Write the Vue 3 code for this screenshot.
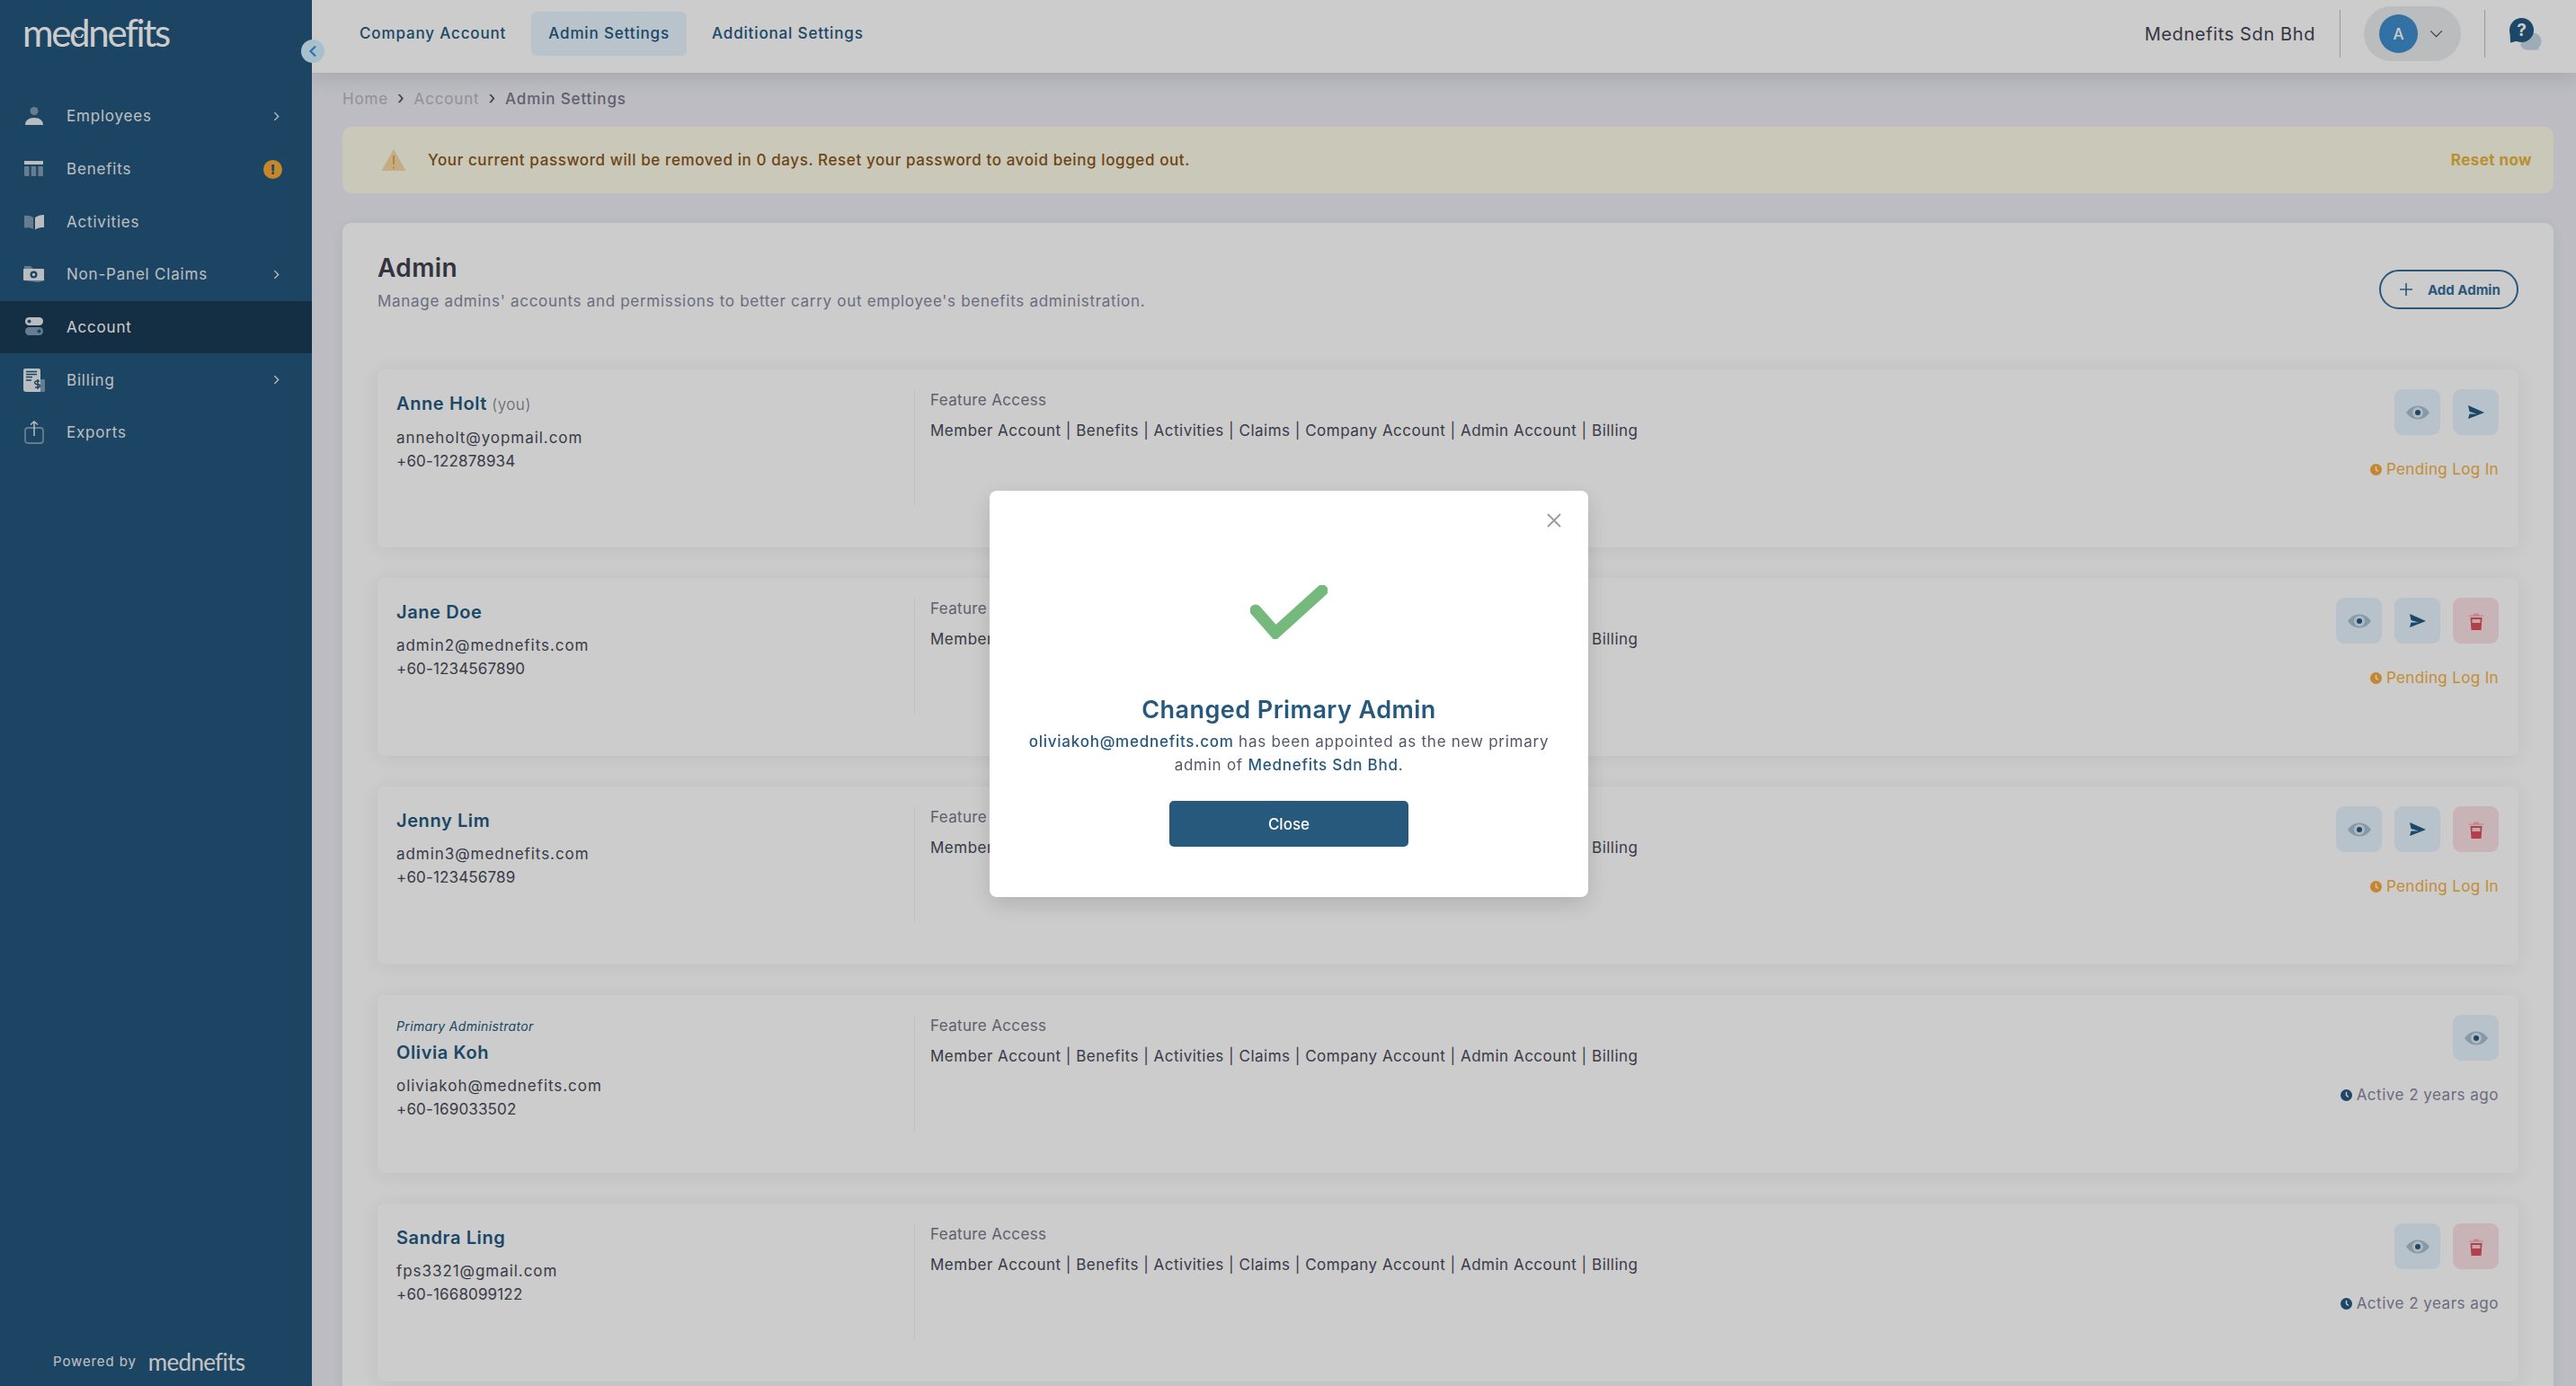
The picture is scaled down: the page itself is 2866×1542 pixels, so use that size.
<script setup>
const nav = [
  { label: 'Employees', icon: 'person', chevron: true },
  { label: 'Benefits', icon: 'table', badge: true },
  { label: 'Activities', icon: 'book' },
  { label: 'Non-Panel Claims', icon: 'cash', chevron: true },
  { label: 'Account', icon: 'toggle', active: true },
  { label: 'Billing', icon: 'bill', chevron: true },
  { label: 'Exports', icon: 'export' },
]
const tabs = [
  { label: 'Company Account' },
  { label: 'Admin Settings', active: true },
  { label: 'Additional Settings' },
]
const features = 'Member Account | Benefits | Activities | Claims | Company Account | Admin Account | Billing'
const admins = [
  { name: 'Anne Holt', you: true, email: 'anneholt@yopmail.com', phone: '+60-122878934', actions: ['view', 'send'], status: 'Pending Log In', pending: true },
  { name: 'Jane Doe', email: 'admin2@mednefits.com', phone: '+60-1234567890', actions: ['view', 'send', 'del'], status: 'Pending Log In', pending: true },
  { name: 'Jenny Lim', email: 'admin3@mednefits.com', phone: '+60-123456789', actions: ['view', 'send', 'del'], status: 'Pending Log In', pending: true },
  { name: 'Olivia Koh', primary: true, email: 'oliviakoh@mednefits.com', phone: '+60-169033502', actions: ['view'], status: 'Active 2 years ago' },
  { name: 'Sandra Ling', email: 'fps3321@gmail.com', phone: '+60-1668099122', actions: ['view', 'del'], status: 'Active 2 years ago' },
]
</script>

<template>
  <div class="app">
    <aside class="sidebar">
      <div class="logo">
        mednefits
        <svg class="smile" viewBox="0 0 10 5" width="10" height="5"><path d="M1 1a4 4 0 0 0 8 0" /></svg>
      </div>
      <nav class="nav">
        <div v-for="item in nav" :key="item.label" class="nav-item" :class="{ active: item.active }">
          <svg class="nav-icon" viewBox="0 0 24 26" width="24" height="26">
            <template v-if="item.icon === 'person'">
              <circle cx="12" cy="7.500" r="4.500" class="mute" />
              <path d="M2 23c0-5 4-8 10-8s10 3 10 8z" class="lite" />
            </template>
            <template v-else-if="item.icon === 'table'">
              <rect x="1" y="4" width="21" height="4" class="lite" />
              <rect x="1" y="10" width="5.500" height="11" rx="1" class="mute" />
              <rect x="8.700" y="10" width="5.500" height="11" rx="1" class="mute" />
              <rect x="16.400" y="10" width="5.500" height="11" rx="1" class="mute" />
            </template>
            <template v-else-if="item.icon === 'book'">
              <path d="M1 6c4-.5 7 0 10 2v13c-3-2-6-2-10-1.500z" class="mute" />
              <path d="M13 8c3-2 6-3 10-3v14c-4 0-7 .5-10 2.500z" class="lite" />
            </template>
            <template v-else-if="item.icon === 'cash'">
              <path d="M1 4h7l16 16-7 2-16-2z" class="mute" />
              <rect x="0" y="7" width="23" height="13" rx="1" class="lite" />
              <circle cx="11.500" cy="13.500" r="4" class="deep" />
              <circle cx="11.500" cy="13.500" r="1.700" class="lite" />
            </template>
            <template v-else-if="item.icon === 'toggle'">
              <rect x="2" y="2" width="20" height="9" rx="4.500" class="lite" />
              <circle cx="6.500" cy="6.500" r="2" class="deep" />
              <rect x="2" y="13" width="20" height="9" rx="4.500" class="mute" />
              <circle cx="17.500" cy="17.500" r="2" class="deep" />
            </template>
            <template v-else-if="item.icon === 'bill'">
              <rect x="19" y="12" width="5" height="14" rx="1" class="mute" />
              <path d="M2 0h15a2 2 0 0 1 2 2v24H3a3 3 0 0 1-3-3V2a2 2 0 0 1 2-2z" class="lite" />
              <path d="M3 3.500h12M3 6.500h12M3 9.500h7M3 13h6" class="line" />
              <path d="M16 12v11M18 14h-3.500a1.500 1.500 0 0 0 0 3.500h2a1.500 1.500 0 0 1 0 3.500H13" class="line" />
            </template>
            <template v-else>
              <rect x="2" y="8" width="20" height="17" rx="3" class="outline" />
              <path d="M12 17V1M8 4.500 12 1l4 3.500" class="arrow" />
            </template>
          </svg>
          <span class="nav-label">{{ item.label }}</span>
          <svg v-if="item.chevron" class="nav-chev" viewBox="0 0 8 12" width="7" height="11">
            <path d="M1.500 1 6.500 6l-5 5" />
          </svg>
          <span v-if="item.badge" class="nav-badge">!</span>
        </div>
      </nav>
      <div class="powered">
        <span>Powered by</span>
        <span class="logo-small">mednefits</span>
      </div>
      <button class="collapse" aria-label="Collapse">
        <svg viewBox="0 0 10 14" width="10" height="14"><path d="M8 1.500 2.500 7 8 12.500" /></svg>
      </button>
    </aside>

    <div class="main">
      <header class="topbar">
        <div class="tabs">
          <span v-for="tab in tabs" :key="tab.label" class="tab" :class="{ active: tab.active }">{{ tab.label }}</span>
        </div>
        <div class="top-right">
          <span class="company">Mednefits Sdn Bhd</span>
          <span class="vline"></span>
          <div class="user-pill">
            <span class="avatar">A</span>
            <svg viewBox="0 0 16 10" width="15" height="9"><path d="M1 1.500 8 8.500l7-7" /></svg>
          </div>
          <span class="vline"></span>
          <svg class="help" viewBox="0 0 36 36" width="36" height="36">
            <path d="M20 22a12 12 0 0 1 12 12l1 1.500h-12a8 8 0 0 1-9-7z" fill="#c6d8e3" />
            <circle cx="26" cy="26" r="9.500" fill="#c6d8e3" />
            <circle cx="13.500" cy="13.500" r="13.500" fill="#235980" />
            <path d="M0.500 15 1 27.500 11 25z" fill="#235980" />
            <text x="13.500" y="19.500" text-anchor="middle" class="help-q">?</text>
          </svg>
        </div>
      </header>

      <div class="content">
        <div class="crumbs">
          <span class="crumb">Home</span>
          <span class="sep">›</span>
          <span class="crumb">Account</span>
          <span class="sep">›</span>
          <span class="crumb current">Admin Settings</span>
        </div>

        <div class="alert">
          <svg class="alert-icon" viewBox="0 0 28 26" width="28" height="26">
            <path d="M14 1 27.500 25H.500z" fill="#f5d9a8" />
            <path d="M14 8v10M14 20.500v2" stroke="#e8a93b" stroke-width="2" />
          </svg>
          <span class="alert-text">Your current password will be removed in 0 days. Reset your password to avoid being logged out.</span>
          <span class="alert-link">Reset now</span>
        </div>

        <section class="panel">
          <div class="panel-head">
            <div>
              <h1>Admin</h1>
              <p>Manage admins' accounts and permissions to better carry out employee's benefits administration.</p>
            </div>
            <button class="add-btn">
              <svg viewBox="0 0 14 14" width="14" height="14"><path d="M7 0v14M0 7h14" /></svg>
              <span>Add Admin</span>
            </button>
          </div>

          <div class="cards">
            <article v-for="a in admins" :key="a.email" class="card">
              <div class="who">
                <div v-if="a.primary" class="tag">Primary Administrator</div>
                <div class="name">{{ a.name }}<span v-if="a.you" class="you"> (you)</span></div>
                <div class="contact email">{{ a.email }}</div>
                <div class="contact">{{ a.phone }}</div>
              </div>
              <div class="access">
                <div class="access-title">Feature Access</div>
                <div class="access-list">{{ features }}</div>
              </div>
              <div class="side">
                <div class="actions">
                  <span v-for="act in a.actions" :key="act" class="act" :class="{ danger: act === 'del' }">
                    <svg v-if="act === 'view'" viewBox="0 0 26 16" width="26" height="16">
                      <path d="M0 8c3-4.500 7.500-7.500 13-7.500S23 3.500 26 8c-3 4.500-7.500 7.500-13 7.500S3 12.500 0 8z" fill="#a7c0d2" />
                      <circle cx="13" cy="8" r="6" fill="#dce8f0" />
                      <circle cx="13" cy="8" r="3" fill="#235980" />
                    </svg>
                    <svg v-else-if="act === 'send'" viewBox="0 0 18 16" width="18" height="16">
                      <path d="M0 0 18 8 0 15 1.500 9.500H10L1.500 7z" fill="#235980" />
                    </svg>
                    <svg v-else viewBox="0 0 16 20" width="16" height="20">
                      <path d="M0 3.500h16v1.200H0zM5 1.500h6v2H5z" fill="#f2a9af" />
                      <path d="M1.500 6h13l-1 14h-11z" fill="#e04f5a" />
                      <rect x="3.500" y="8" width="9" height="4" fill="#f6d4d6" />
                    </svg>
                  </span>
                </div>
                <div class="status" :class="{ pending: a.pending }">
                  <svg viewBox="0 0 14 14" width="13" height="13">
                    <circle cx="7" cy="7" r="7" class="clock" />
                    <path d="M7 3v4.200l2.500 1.800" class="hands" />
                  </svg>
                  <span>{{ a.status }}</span>
                </div>
              </div>
            </article>
          </div>
        </section>
      </div>
    </div>

    <div class="overlay">
      <div class="modal">
        <svg class="modal-x" viewBox="0 0 16 16" width="16" height="16"><path d="M1 1l14 14M15 1 1 15" /></svg>
        <svg class="check" viewBox="0 0 86 60" width="86" height="60">
          <path d="M6 28 28 53 80 6" />
        </svg>
        <h2>Changed Primary Admin</h2>
        <p><b>oliviakoh@mednefits.com</b> has been appointed as the new primary<br />admin of <b>Mednefits Sdn Bhd</b>.</p>
        <button class="close-btn">Close</button>
      </div>
    </div>
  </div>
</template>

<style>
html, body { margin: 0; background: #ebecf3; }
</style>

<style scoped>
* { box-sizing: border-box; }
.app {
  display: flex;
  height: 100vh;
  overflow: hidden;
  font-family: "Inter", "Noto Sans", sans-serif;
  font-size: 17px;
  color: #494a59;
}
.sidebar {
  position: relative;
  flex: 0 0 347px;
  display: flex;
  flex-direction: column;
  background: #24567c;
  z-index: 2;
}
.logo {
  position: relative;
  height: 100px;
  padding: 8px 0 0 25px;
  font-family: "Lato", sans-serif;
  font-weight: 400;
  font-size: 42px;
  line-height: 56px;
  letter-spacing: -2.300px;
  color: #fff;
}
.smile { position: absolute; left: 83px; top: 37px; }
.smile path { fill: none; stroke: #fff; stroke-width: 1.800; }
.nav-item {
  display: flex;
  align-items: center;
  height: 58.700px;
  padding: 0 36px 0 26px;
  color: #eaeef1;
}
.nav-item.active { background: #193a54; color: #fff; }
.nav-icon { flex: none; margin-right: 24px; }
.nav-label { font-size: 17px; letter-spacing: .8px; }
.nav-chev { margin-left: auto; }
.nav-chev path { fill: none; stroke: #eaeef1; stroke-width: 1.600; }
.nav-badge {
  margin-left: auto;
  margin-right: -3px;
  width: 21px;
  height: 21px;
  border-radius: 50%;
  background: #faa836;
  color: #24567c;
  font-weight: 800;
  font-size: 15px;
  line-height: 21px;
  text-align: center;
}
.lite { fill: #e8edf0; }
.mute { fill: #7f9db3; }
.deep { fill: #24567c; }
.line { fill: none; stroke: #24567c; stroke-width: 1.500; }
.outline { fill: none; stroke: #7f9db3; stroke-width: 1.800; }
.arrow { fill: none; stroke: #e8edf0; stroke-width: 1.500; }
.powered {
  margin-top: auto;
  height: 42px;
  padding-left: 59px;
  display: flex;
  align-items: flex-start;
  gap: 13px;
  font-size: 15px;
  letter-spacing: .9px;
  line-height: 30px;
  color: #f0f2f4;
}
.logo-small {
  font-family: "Lato", sans-serif;
  font-size: 26px;
  font-weight: 400;
  letter-spacing: -.7px;
  line-height: 30px;
  color: #f6f6f6;
}
.collapse {
  position: absolute;
  top: 44px;
  right: -14px;
  width: 26px;
  height: 26px;
  padding: 0;
  border: 0;
  border-radius: 50%;
  background: #d0f0ff;
  display: flex;
  align-items: center;
  justify-content: center;
}
.collapse path { fill: none; stroke: #3a91d8; stroke-width: 2.200; }

.main { flex: 1; min-width: 0; display: flex; flex-direction: column; }
.topbar {
  flex: 0 0 81px;
  display: flex;
  align-items: center;
  justify-content: space-between;
  padding: 0 38px 0 34px;
  background: #fff;
  box-shadow: 0 4px 22px rgba(30, 30, 60, .14);
  position: relative;
  z-index: 1;
}
.tabs { display: flex; gap: 9px; margin-top: -7px; }
.tab {
  height: 49px;
  padding: 0 19px;
  display: flex;
  align-items: center;
  border-radius: 6px;
  color: #235980;
  font-weight: 500;
  font-size: 17px;
  letter-spacing: .85px;
}
.tab.active { background: #e7f4fe; }
.top-right { display: flex; align-items: center; margin-top: -6px; }
.company { font-size: 20px; font-weight: 400; letter-spacing: .6px; color: #444555; margin-right: 27px; }
.vline { width: 1px; height: 53px; background: #bfc0c8; }
.user-pill {
  height: 61px;
  width: 108px;
  margin: 0 26px;
  padding-left: 17px;
  display: flex;
  align-items: center;
  gap: 13px;
  border-radius: 31px;
  background: #eaebee;
}
.user-pill path { fill: none; stroke: #444555; stroke-width: 1.200; }
.avatar {
  width: 43px;
  height: 43px;
  border-radius: 50%;
  background: #3f8ecc;
  color: #fff;
  display: flex;
  align-items: center;
  justify-content: center;
  font-size: 17px;
  font-weight: 500;
}
.help { margin-left: 27px; }
.help-q { fill: #fff; font-size: 19px; font-weight: 700; font-family: "Inter", sans-serif; }

.content { flex: 1; min-height: 0; padding: 0 25px 0 34px; }
.crumbs {
  height: 58px;
  margin-bottom: 2px;
  display: flex;
  align-items: center;
  gap: 10px;
  font-size: 17px;
  letter-spacing: .85px;
  color: #b4b5c2;
}
.sep { color: #4c4d5c; font-size: 20px; line-height: 20px; margin-top: -3px; }
.current { color: #777889; font-weight: 500; }
.alert {
  height: 74px;
  display: flex;
  align-items: center;
  padding: 0 24px 0 43px;
  border-radius: 10px;
  background: #fcfae8;
}
.alert-icon { flex: none; margin-right: 24px; }
.alert-text { font-size: 17px; font-weight: 500; letter-spacing: .6px; color: #8b5519; }
.alert-link { margin-left: auto; font-size: 17px; font-weight: 700; letter-spacing: .45px; color: #e6b43b; }
.panel {
  margin-top: 33px;
  height: 1400px;
  padding: 32px 39px 0;
  border-radius: 10px;
  background: #fff;
  box-shadow: 0 2px 14px rgba(40, 40, 80, .05);
}
.panel-head { height: 131px; display: flex; justify-content: space-between; align-items: flex-start; }
h1 { margin: 0; font-size: 28px; font-weight: 600; line-height: 36px; letter-spacing: .4px; color: #40414f; }
.panel-head p { margin: 6px 0 0; font-size: 17px; line-height: 26px; letter-spacing: .7px; color: #8688a0; }
.add-btn {
  margin-top: 20px;
  width: 155px;
  height: 44px;
  display: flex;
  align-items: center;
  gap: 17px;
  padding: 0 0 0 21px;
  border: 2px solid #346f9c;
  border-radius: 22px;
  background: transparent;
  color: #346f9c;
  font-family: inherit;
  font-size: 15px;
  font-weight: 700;
}
.add-btn path { stroke: #346f9c; stroke-width: 1.600; fill: none; }
.cards { display: flex; flex-direction: column; gap: 34px; }
.card {
  height: 198px;
  display: flex;
  padding: 22px 22px 0 21px;
  border-radius: 8px;
  background: #fff;
  box-shadow: 0 2px 22px rgba(20, 20, 40, .07);
}
.who { flex: 0 0 576px; padding-top: 3px; }
.tag { font-size: 14px; font-style: italic; line-height: 20px; letter-spacing: .35px; color: #235980; margin-bottom: 6px; }
.name { font-size: 20px; font-weight: 600; line-height: 26px; letter-spacing: .6px; color: #235980; margin-bottom: 11px; }
.you { font-weight: 300; font-size: 17px; letter-spacing: .5px; color: #777889; }
.contact { font-size: 17px; line-height: 26px; letter-spacing: .15px; color: #494a59; }
.contact.email { letter-spacing: .95px; }
.access { flex: 1; height: 130px; padding-left: 17px; border-left: 1px solid #f0f0f3; }
.access-title { font-size: 17px; line-height: 24px; letter-spacing: .35px; color: #777889; margin-bottom: 10px; }
.access-list { font-size: 17px; line-height: 24px; letter-spacing: .49px; color: #494a59; }
.side { display: flex; flex-direction: column; align-items: flex-end; }
.actions { display: flex; gap: 14px; }
.act {
  width: 51px;
  height: 51px;
  border-radius: 9px;
  background: #e7f3fd;
  display: flex;
  align-items: center;
  justify-content: center;
}
.act.danger { background: #fae1e4; }
.status {
  margin-top: 26px;
  display: flex;
  align-items: center;
  gap: 5px;
  font-size: 17px;
  line-height: 24px;
  letter-spacing: .5px;
  color: #8688a0;
  white-space: nowrap;
}
.status.pending { color: #f5b042; letter-spacing: .35px; }
.clock { fill: #235980; }
.status.pending .clock { fill: #f5a83a; }
.hands { fill: none; stroke: #fff; stroke-width: 1.500; }

.overlay {
  position: fixed;
  inset: 0;
  z-index: 5;
  display: flex;
  align-items: center;
  justify-content: center;
  background: rgba(0, 0, 0, .2);
}
.modal {
  position: relative;
  width: 666px;
  height: 452px;
  margin: 2px 0 0 2px;
  display: flex;
  flex-direction: column;
  align-items: center;
  padding-top: 105px;
  border-radius: 8px;
  background: #fff;
  box-shadow: 0 8px 26px rgba(0, 0, 0, .14);
}
.modal-x { position: absolute; top: 25px; right: 30px; }
.modal-x path { fill: none; stroke: #9a9ba6; stroke-width: 1.800; }
.check path { fill: none; stroke: #75b97c; stroke-width: 13; stroke-linecap: round; stroke-linejoin: miter; }
h2 { margin: 60px 0 0; font-size: 27px; font-weight: 600; line-height: 37px; letter-spacing: .45px; color: #27597d; }
.modal p { margin: 4px 0 0; font-size: 17px; line-height: 26px; letter-spacing: .75px; text-align: center; color: #55566a; }
.modal b { font-weight: 500; color: #27597d; }
.close-btn {
  margin-top: 27px;
  width: 266px;
  height: 51px;
  border: 0;
  border-radius: 5px;
  background: #27597d;
  color: #fff;
  font-family: inherit;
  font-size: 17px;
  font-weight: 500;
}
</style>
